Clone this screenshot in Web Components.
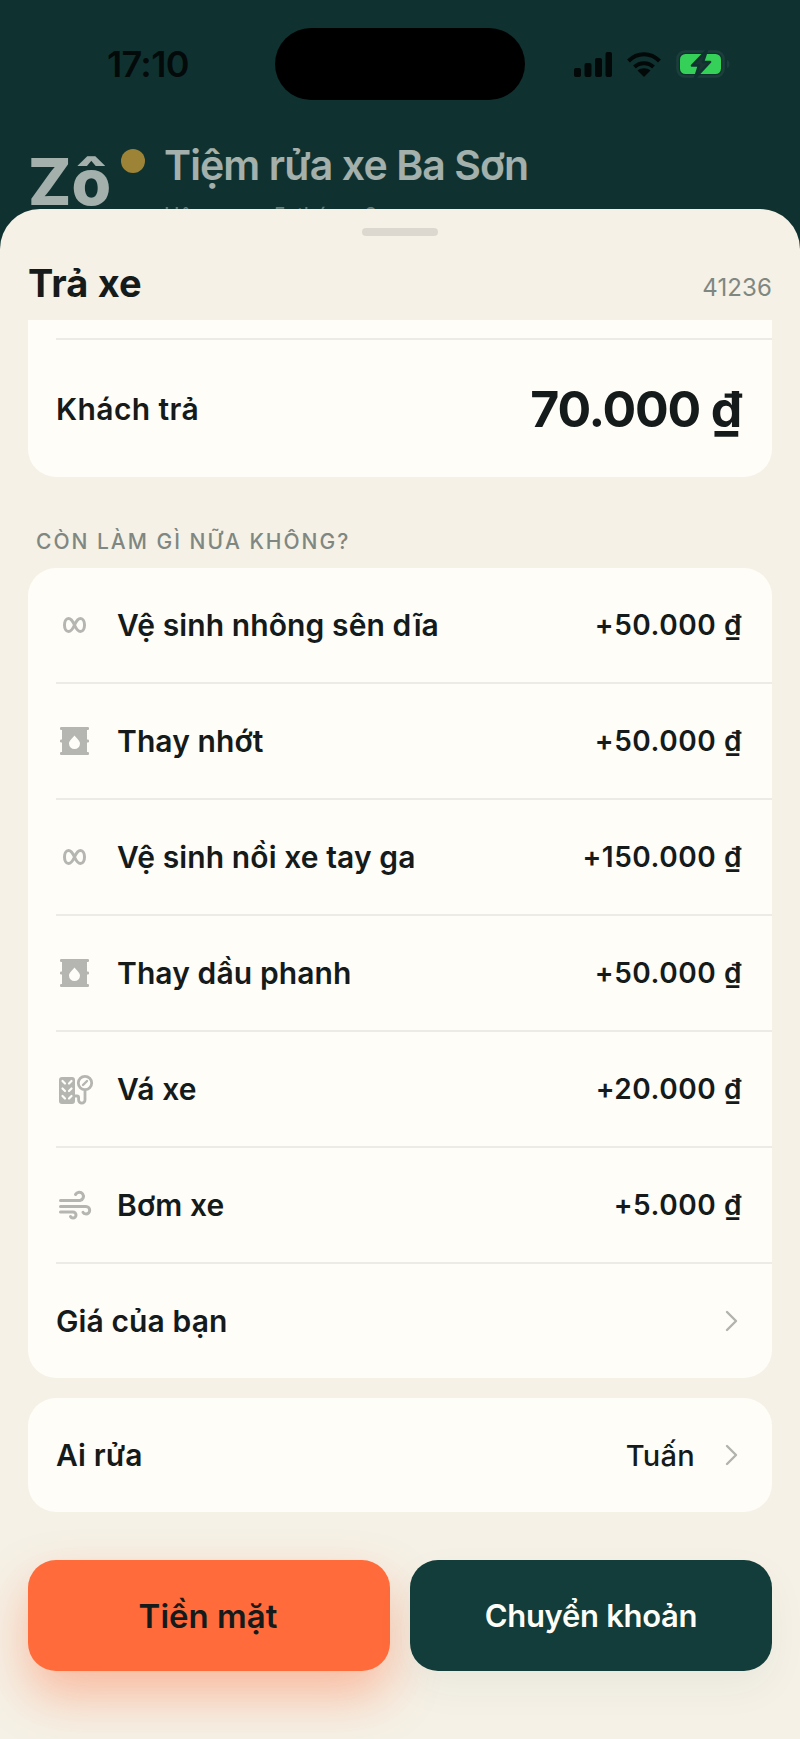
<!DOCTYPE html>
<html lang="vi">
<head>
<meta charset="utf-8">
<title>Trả xe</title>
<style>
  html, body { margin: 0; padding: 0; height: 100%; }
  body {
    width: 800px; height: 1739px; overflow: hidden; position: relative;
    background: #0f3230; color: #151a1a;
    font-family: Inter, "Noto Sans", "Liberation Sans", sans-serif;
  }
</style>
</head>
<body>
<status-bar></status-bar>
<shop-header name="Tiệm rửa xe Ba Sơn" sub="Hôm nay, 5 tháng 8"></shop-header>
<bottom-sheet title="Trả xe" code="41236">
  <sheet-card clip>
    <total-row label="Khách trả" value="70.000 ₫"></total-row>
  </sheet-card>
  <section-label>CÒN LÀM GÌ NỮA KHÔNG?</section-label>
  <sheet-card>
    <service-row icon="chain" name="Vệ sinh nhông sên dĩa" price="+50.000 ₫"></service-row>
    <service-row icon="oil" name="Thay nhớt" price="+50.000 ₫"></service-row>
    <service-row icon="chain" name="Vệ sinh nồi xe tay ga" price="+150.000 ₫"></service-row>
    <service-row icon="oil" name="Thay dầu phanh" price="+50.000 ₫"></service-row>
    <service-row icon="tire" name="Vá xe" price="+20.000 ₫"></service-row>
    <service-row icon="wind" name="Bơm xe" price="+5.000 ₫"></service-row>
    <link-row label="Giá của bạn" plain></link-row>
  </sheet-card>
  <sheet-card class="who">
    <link-row label="Ai rửa" value="Tuấn"></link-row>
  </sheet-card>
  <action-bar slot="footer">
    <pay-button kind="cash">Tiền mặt</pay-button>
    <pay-button kind="transfer">Chuyển khoản</pay-button>
  </action-bar>
</bottom-sheet>

<script>
// Icons used in the service rows, all on the same 40x32 canvas
const svgIcon = (inner) => `<svg viewBox="0 0 40 32" width="40" height="32" fill="none" stroke="#b5b5b2" stroke-linecap="round">${inner}</svg>`;
const ICONS = {
  chain: svgIcon(`<path stroke-width="3" d="M18.500 16C16.500 11.500 15 9.500 12.500 9.500C10 9.500 8.500 12.500 8.500 16C8.500 19.500 10 22.500 12.500 22.500C15 22.500 16.500 20.500 18.500 16C20.500 11.500 22 9.500 24.500 9.500C27 9.500 28.500 12.500 28.500 16C28.500 19.500 27 22.500 24.500 22.500C22 22.500 20.500 20.500 18.500 16Z"/>`),
  oil: svgIcon(`<g fill="#b5b5b2" stroke="none">
      <rect x="4" y="2" width="29" height="3" rx="1.200"/>
      <rect x="4" y="27" width="29" height="3" rx="1.200"/>
      <rect x="4" y="14.500" width="29" height="3" rx="1.200"/>
      <rect x="6" y="3" width="25" height="26"/>
    </g>
    <path fill="#fffdf8" stroke="none" d="M18.500 10.500C16.500 13.500 13 15.500 13 18.500a5.500 5.500 0 0 0 11 0C24 15.500 20.500 13.500 18.500 10.500z"/>`),
  tire: svgIcon(`<rect x="3" y="4" width="16" height="27" rx="3" fill="#b5b5b2" stroke="none"/>
    <path stroke="#fffdf8" stroke-width="2.200" d="M6.500 8l2.500 2.500M15.500 8l-2.500 2.500M6.500 15.500l2.500 2.500M15.500 15.500l-2.500 2.500M6.500 23l2.500 2.500M15.500 23l-2.500 2.500"/>
    <circle cx="29" cy="10" r="6.700" stroke-width="2.800"/>
    <path stroke-width="2.400" d="M27 12l4-4"/>
    <path stroke-width="2.800" d="M29 18v9a3.200 3.200 0 0 1-6.400 0v-2.500q0-1.500-1.500-1.500h-2"/>`),
  wind: svgIcon(`<g stroke-width="3">
      <path d="M4.500 11.500H24a4.200 4.200 0 1 0-4.500-6"/>
      <path d="M4.500 17.500H30a3.700 3.700 0 0 1 0 7.400c-1.500 0-2.500-.5-3-1.500"/>
      <path d="M4.500 23H17a3 3 0 0 1 0 6c-1.200 0-2-.5-2.500-1.500"/>
    </g>`)
};

// iPhone status bar with the island
class StatusBar extends HTMLElement {
  constructor() {
    super();
    this.attachShadow({ mode: 'open' });
    this.shadowRoot.innerHTML = `
      <style>
        :host { display: block; height: 128px; box-sizing: border-box; padding-top: 28px; }
        .bar { display: grid; grid-template-columns: 275px 250px 275px; height: 72px; align-items: center; }
        .time { font: 600 36px "Inter", sans-serif; letter-spacing: -0.7px; color: #040a0a; padding-left: 107px; line-height: 1; }
        .island { height: 72px; background: #000; border-radius: 36px; }
        .icons { display: flex; align-items: center; gap: 15px; padding-left: 49px; }
      </style>
      <div class="bar">
        <span class="time">17:10</span>
        <div class="island"></div>
        <div class="icons">
          <svg width="38" height="25" viewBox="0 0 38 25" fill="#030808">
            <rect x="0" y="16" width="7" height="9" rx="2"/>
            <rect x="10.500" y="11" width="7" height="14" rx="2"/>
            <rect x="21" y="6" width="7" height="19" rx="2"/>
            <rect x="31.500" y="0" width="6.500" height="25" rx="2"/>
          </svg>
          <svg width="34" height="25" viewBox="0 0 34 25" fill="none" stroke="#030808" stroke-width="4">
            <path d="M1.500 9C10.500 0 23.500 0 32.500 9"/>
            <path d="M7.500 15C13 10 21 10 26.500 15"/>
            <path d="M17 25L10.500 18.500C14 15.500 20 15.500 23.500 18.500z" fill="#030808" stroke="none"/>
          </svg>
          <svg width="54" height="28" viewBox="0 0 54 28" fill="none">
            <rect x="1.500" y="1.500" width="46" height="25" rx="7.500" stroke="#1d3f3c" stroke-width="2.500" fill="#0f3230"/>
            <rect x="4" y="4" width="41" height="20" rx="5.500" fill="#34d058"/>
            <path d="M51 10c1.500.5 2.500 2 2.500 4s-1 3.500-2.500 4z" fill="#1d3f3c"/>
            <path d="M31 0L16 15.500h7L19 28l15-16h-7z" fill="#1a3533" stroke="#0f3230" stroke-width="2.500" stroke-linejoin="round"/>
          </svg>
        </div>
      </div>`;
  }
}

// Shop heading, mostly hidden behind the sheet
class ShopHeader extends HTMLElement {
  constructor() {
    super();
    this.attachShadow({ mode: 'open' });
    const name = this.getAttribute('name');
    const sub = this.getAttribute('sub');
    this.shadowRoot.innerHTML = `
      <style>
        :host { display: flex; padding-left: 30px; opacity: .62; color: #fff; }
        .logo { position: relative; width: 134px; }
        .mark { font: 800 64px/1 Inter, sans-serif; color: #fffdf8; display: block; margin: 22px 0 0 -2px; }
        .dot { position: absolute; left: 91px; top: 21px; width: 24px; height: 24px; border-radius: 50%; background: #f5b63a; }
        h1 { margin: 11px 0 0; font: 600 41px/52px Inter, sans-serif; letter-spacing: -.9px; color: #fffdf8; }
        p { margin: 13px 0 0; font: 400 21px/24px Inter, sans-serif; word-spacing: 5px; color: #fffdf8; opacity: .6; }
      </style>
      <div class="logo"><span class="mark">Zô</span><span class="dot"></span></div>
      <div><h1>${name}</h1><p>${sub}</p></div>`;
  }
}

// The sheet lies over the page: handle, title, scroll area and footer
class BottomSheet extends HTMLElement {
  constructor() {
    super();
    this.attachShadow({ mode: 'open' });
    const title = this.getAttribute('title');
    const code = this.getAttribute('code');
    this.shadowRoot.innerHTML = `
      <style>
        :host {
          display: flex; flex-direction: column; position: absolute; left: 0; right: 0; top: 209px; bottom: 0;
          background: #f5f1e6; border-radius: 40px 40px 0 0; overflow: hidden;
        }
        .handle { width: 76px; height: 8px; border-radius: 4px; background: #dcd8d0; margin: 19px auto 0; }
        .head { height: 84px; flex: none; box-sizing: border-box; padding: 0 28px; display: flex; justify-content: space-between; align-items: flex-start; }
        h2 { margin: 25px 0 0; font: 700 38px/44px Inter, sans-serif; letter-spacing: .1px; color: #151a1a; }
        .code { margin-top: 34px; font: 400 24px/36px Inter, sans-serif; letter-spacing: .1px; color: #7f8782; }
        .scroll { flex: none; height: 1192px; overflow: hidden; padding: 0 28px; display: flex; flex-direction: column; box-sizing: border-box; }
        .foot { flex: 1; padding: 0 28px; }
      </style>
      <div class="handle"></div>
      <div class="head"><h2>${title}</h2><span class="code">${code}</span></div>
      <div class="scroll"><slot></slot></div>
      <div class="foot"><slot name="footer"></slot></div>`;
  }
}

class SheetCard extends HTMLElement {
  constructor() {
    super();
    this.attachShadow({ mode: 'open' });
    this.shadowRoot.innerHTML = `
      <style>
        :host { display: block; flex: none; background: #fffdf8; border-radius: 28px; overflow: hidden; }
        :host([clip]) { border-radius: 0 0 28px 28px; }
        :host(.who) { margin-top: 20px; }
      </style>
      <slot></slot>`;
  }
}

class SectionLabel extends HTMLElement {
  constructor() {
    super();
    this.attachShadow({ mode: 'open' });
    this.shadowRoot.innerHTML = `
      <style>
        :host {
          display: block; flex: none; height: 91px; box-sizing: border-box; padding: 51px 0 0 8px;
          font: 500 21px/28px Inter, sans-serif; letter-spacing: 2px; color: #7f8782;
        }
      </style>
      <slot></slot>`;
  }
}

class TotalRow extends HTMLElement {
  constructor() {
    super();
    this.attachShadow({ mode: 'open' });
    const label = this.getAttribute('label');
    const value = this.getAttribute('value');
    this.shadowRoot.innerHTML = `
      <style>
        :host { display: block; height: 157px; box-sizing: border-box; padding: 18px 0 0 28px; }
        .line { height: 2px; background: #ecebe6; }
        .row { display: flex; justify-content: space-between; align-items: center; height: 69px; margin-top: 34px; padding-right: 31px; }
        .label { font: 600 30px Inter, sans-serif; letter-spacing: .4px; }
        .value { font: 700 50px Inter, sans-serif; letter-spacing: -1.2px; }
      </style>
      <div class="line"></div>
      <div class="row"><span class="label">${label}</span><span class="value">${value}</span></div>`;
  }
}

class ServiceRow extends HTMLElement {
  constructor() {
    super();
    this.attachShadow({ mode: 'open' });
    const icon = ICONS[this.getAttribute('icon')];
    const name = this.getAttribute('name');
    const price = this.getAttribute('price');
    this.shadowRoot.innerHTML = `
      <style>
        :host { display: block; padding-left: 28px; }
        .row {
          display: flex; align-items: center; height: 116px; box-sizing: border-box; padding-right: 30px;
          border-bottom: 2px solid #ecebe6;
        }
        .ico { width: 61px; flex: none; display: flex; align-items: center; }
        .name { flex: 1; font: 600 30px Inter, sans-serif; letter-spacing: .1px; }
        .price { font: 600 28px Inter, sans-serif; letter-spacing: .55px; }
      </style>
      <div class="row">
        <span class="ico">${icon}</span>
        <span class="name">${name}</span>
        <span class="price">${price}</span>
      </div>`;
  }
}

class LinkRow extends HTMLElement {
  constructor() {
    super();
    this.attachShadow({ mode: 'open' });
    const label = this.getAttribute('label');
    const value = this.getAttribute('value') || '';
    this.shadowRoot.innerHTML = `
      <style>
        :host { display: flex; align-items: center; height: 114px; padding: 0 34px 0 28px; font: 600 30px Inter, sans-serif; letter-spacing: .1px; }
        .label { flex: 1; }
        .value { font-size: 29px; font-weight: 500; margin-right: 30px; letter-spacing: .3px; }
      </style>
      <span class="label">${label}</span>
      ${value ? `<span class="value">${value}</span>` : ''}
      <svg width="13" height="22" viewBox="0 0 13 22" fill="none" stroke="#b3b3ae" stroke-width="2.400" stroke-linecap="round" stroke-linejoin="round"><path d="M2 2l9 9-9 9"/></svg>`;
  }
}

class ActionBar extends HTMLElement {
  constructor() {
    super();
    this.attachShadow({ mode: 'open' });
    this.shadowRoot.innerHTML = `
      <style>
        :host { display: grid; grid-template-columns: 1fr 1fr; gap: 20px; padding-top: 48px; }
      </style>
      <slot></slot>`;
  }
}

class PayButton extends HTMLElement {
  constructor() {
    super();
    this.attachShadow({ mode: 'open' });
    this.shadowRoot.innerHTML = `
      <style>
        :host {
          display: flex; align-items: center; justify-content: center; height: 111px; border-radius: 28px;
          font: 600 31px Inter, sans-serif; letter-spacing: -.3px;
        }
        :host([kind="cash"]) { background: #ff6b3a; color: #151a1a; font-size: 33px; letter-spacing: 0; padding-right: 2px; box-shadow: 0 24px 50px rgba(255, 107, 58, .42); }
        :host([kind="transfer"]) { background: #123d3a; color: #fffdf8; box-shadow: 0 16px 40px rgba(18, 61, 58, .05); }
      </style>
      <slot></slot>`;
  }
}

customElements.define('status-bar', StatusBar);
customElements.define('shop-header', ShopHeader);
customElements.define('bottom-sheet', BottomSheet);
customElements.define('sheet-card', SheetCard);
customElements.define('section-label', SectionLabel);
customElements.define('total-row', TotalRow);
customElements.define('service-row', ServiceRow);
customElements.define('link-row', LinkRow);
customElements.define('action-bar', ActionBar);
customElements.define('pay-button', PayButton);
</script>
</body>
</html>
